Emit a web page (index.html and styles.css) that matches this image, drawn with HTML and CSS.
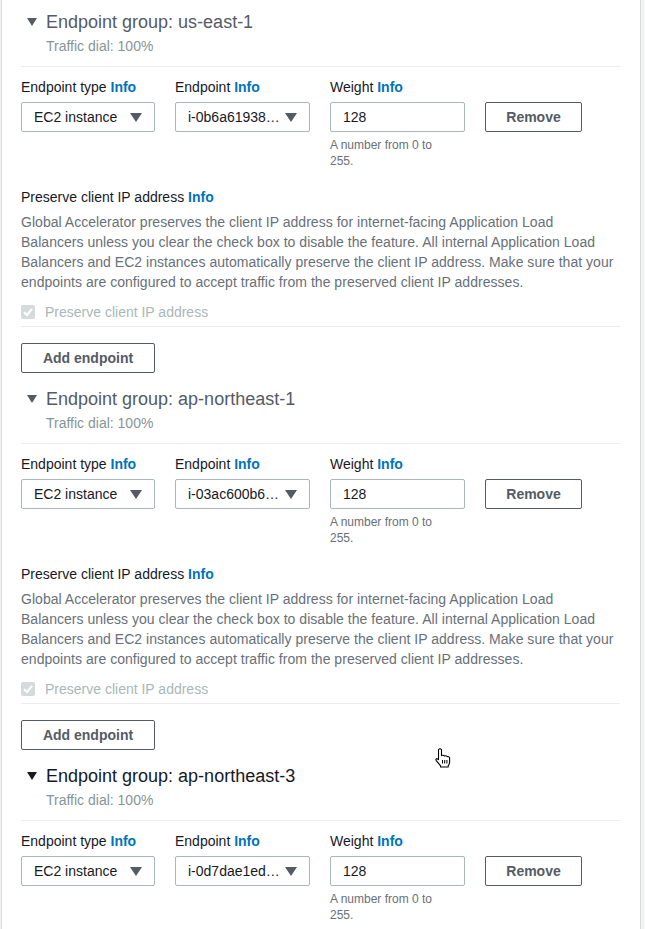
FILE: index.html
```html
<!DOCTYPE html>
<html lang="en">
<head>
<meta charset="utf-8">
<title>Endpoint groups</title>
<link rel="stylesheet" href="styles.css">
</head>
<body>
<div class="panel">

  <section class="group">
    <div class="group-head">
      <svg class="caret" viewBox="0 0 10 8" width="10" height="8"><path d="M0 0 H10 L5 8 Z"/></svg>
      <span class="group-title">Endpoint group: us-east-1</span>
    </div>
    <div class="dial">Traffic dial: 100%</div>
    <div class="divider"></div>
    <div class="endpoint-row">
      <div class="field f-type">
        <div class="label">Endpoint type <a class="info">Info</a></div>
        <div class="select"><span class="select-text">EC2 instance</span><svg class="sel-caret" viewBox="0 0 12 9" width="12" height="9"><path d="M0 0 H12 L6 9 Z"/></svg></div>
      </div>
      <div class="field f-endpoint">
        <div class="label">Endpoint <a class="info">Info</a></div>
        <div class="select"><span class="select-text">i-0b6a61938…</span><svg class="sel-caret" viewBox="0 0 12 9" width="12" height="9"><path d="M0 0 H12 L6 9 Z"/></svg></div>
      </div>
      <div class="field f-weight">
        <div class="label">Weight <a class="info">Info</a></div>
        <div class="input">128</div>
        <div class="hint">A number from 0 to<br>255.</div>
      </div>
      <button class="btn btn-remove">Remove</button>
    </div>
    <div class="preserve">
      <div class="label">Preserve client IP address <a class="info">Info</a></div>
      <p class="desc">Global Accelerator preserves the client IP address for internet-facing Application Load<br>Balancers unless you clear the check box to disable the feature. All internal Application Load<br>Balancers and EC2 instances automatically preserve the client IP address. Make sure that your<br>endpoints are configured to accept traffic from the preserved client IP addresses.</p>
      <div class="check"><span class="box"><svg viewBox="0 0 14 14" width="14" height="14"><path d="M3 7.2 L6 10 L11 3.8" fill="none" stroke="#fff" stroke-width="2"/></svg></span><span class="check-text">Preserve client IP address</span></div>
    </div>
    <div class="divider divider-bottom"></div>
    <button class="btn btn-add">Add endpoint</button>
  </section>

  <section class="group">
    <div class="group-head">
      <svg class="caret" viewBox="0 0 10 8" width="10" height="8"><path d="M0 0 H10 L5 8 Z"/></svg>
      <span class="group-title">Endpoint group: ap-northeast-1</span>
    </div>
    <div class="dial">Traffic dial: 100%</div>
    <div class="divider"></div>
    <div class="endpoint-row">
      <div class="field f-type">
        <div class="label">Endpoint type <a class="info">Info</a></div>
        <div class="select"><span class="select-text">EC2 instance</span><svg class="sel-caret" viewBox="0 0 12 9" width="12" height="9"><path d="M0 0 H12 L6 9 Z"/></svg></div>
      </div>
      <div class="field f-endpoint">
        <div class="label">Endpoint <a class="info">Info</a></div>
        <div class="select"><span class="select-text">i-03ac600b6…</span><svg class="sel-caret" viewBox="0 0 12 9" width="12" height="9"><path d="M0 0 H12 L6 9 Z"/></svg></div>
      </div>
      <div class="field f-weight">
        <div class="label">Weight <a class="info">Info</a></div>
        <div class="input">128</div>
        <div class="hint">A number from 0 to<br>255.</div>
      </div>
      <button class="btn btn-remove">Remove</button>
    </div>
    <div class="preserve">
      <div class="label">Preserve client IP address <a class="info">Info</a></div>
      <p class="desc">Global Accelerator preserves the client IP address for internet-facing Application Load<br>Balancers unless you clear the check box to disable the feature. All internal Application Load<br>Balancers and EC2 instances automatically preserve the client IP address. Make sure that your<br>endpoints are configured to accept traffic from the preserved client IP addresses.</p>
      <div class="check"><span class="box"><svg viewBox="0 0 14 14" width="14" height="14"><path d="M3 7.2 L6 10 L11 3.8" fill="none" stroke="#fff" stroke-width="2"/></svg></span><span class="check-text">Preserve client IP address</span></div>
    </div>
    <div class="divider divider-bottom"></div>
    <button class="btn btn-add">Add endpoint</button>
  </section>

  <section class="group group-hover">
    <div class="group-head">
      <svg class="caret" viewBox="0 0 10 8" width="10" height="8"><path d="M0 0 H10 L5 8 Z"/></svg>
      <span class="group-title">Endpoint group: ap-northeast-3</span>
    </div>
    <div class="dial">Traffic dial: 100%</div>
    <div class="divider"></div>
    <div class="endpoint-row">
      <div class="field f-type">
        <div class="label">Endpoint type <a class="info">Info</a></div>
        <div class="select"><span class="select-text">EC2 instance</span><svg class="sel-caret" viewBox="0 0 12 9" width="12" height="9"><path d="M0 0 H12 L6 9 Z"/></svg></div>
      </div>
      <div class="field f-endpoint">
        <div class="label">Endpoint <a class="info">Info</a></div>
        <div class="select"><span class="select-text">i-0d7dae1ed…</span><svg class="sel-caret" viewBox="0 0 12 9" width="12" height="9"><path d="M0 0 H12 L6 9 Z"/></svg></div>
      </div>
      <div class="field f-weight">
        <div class="label">Weight <a class="info">Info</a></div>
        <div class="input">128</div>
        <div class="hint">A number from 0 to<br>255.</div>
      </div>
      <button class="btn btn-remove">Remove</button>
    </div>
  </section>

  <svg class="cursor" viewBox="0 0 18 20" width="18" height="20">
    <path d="M5.5 1.6 Q7 0 8.5 1.6 V7.6 Q10 6.8 11.5 8 Q13 7.2 14.3 8.6 Q16 8.2 16.6 9.8 V14 Q16.6 16 15.2 17.6 V19 H7.6 V17.8 L3.2 12.6 Q2.4 11 4 10.6 L5.5 11.6 Z" fill="#fff" stroke="#000" stroke-width="1.1" stroke-linejoin="round"/>
    <path d="M9.5 12 V15.5 M11.7 12 V15.5 M13.9 12 V15.5" stroke="#000" stroke-width="1"/>
  </svg>
</div>
</body>
</html>
```

FILE: styles.css
```css
html, body {
  margin: 0;
  padding: 0;
}

body {
  background: #f2f3f3;
  font-family: "Liberation Sans", Arial, Helvetica, sans-serif;
  color: #16191f;
  height: 929px;
  overflow: hidden;
}

.panel {
  position: relative;
  box-sizing: border-box;
  width: 640px;
  margin-left: 1px;
  min-height: 929px;
  background: #fff;
  border-left: 1px solid #d5dbdb;
  border-right: 1px solid #d5dbdb;
  padding: 11px 20px 0 19px;
}

.group {
  padding-bottom: 15px;
}

.group-head {
  display: flex;
  align-items: center;
  padding-left: 6px;
  height: 22px;
  gap: 9px;
}

.caret {
  fill: #545b64;
  flex: none;
}

.group-title {
  font-size: 18px;
  line-height: 22px;
  color: #545b64;
}

.group-hover .caret {
  fill: #16191f;
}

.group-hover .group-title {
  color: #16191f;
}

.dial {
  margin-top: 3px;
  padding-left: 25px;
  font-size: 14px;
  line-height: 20px;
  color: #879596;
}

.divider {
  height: 1px;
  background: #eaeded;
  margin-top: 10px;
}

.endpoint-row {
  display: flex;
  align-items: flex-start;
  gap: 20px;
  margin-top: 10px;
}

.label {
  font-size: 14px;
  line-height: 20px;
  color: #16191f;
}

.info {
  color: #0073bb;
  font-weight: bold;
  text-decoration: none;
}

.f-type { width: 134px; }
.f-endpoint { width: 135px; }
.f-weight { width: 135px; }

.select,
.input {
  box-sizing: border-box;
  height: 30px;
  margin-top: 5px;
  border: 1px solid #aab7b8;
  border-radius: 2px;
  font-size: 14px;
  line-height: 28px;
  color: #16191f;
  padding-left: 12px;
}

.select {
  display: flex;
  align-items: center;
  justify-content: space-between;
  padding-right: 12px;
}

.select-text {
  white-space: nowrap;
  overflow: hidden;
}

.sel-caret {
  fill: #545b64;
  flex: none;
}

.hint {
  margin-top: 5px;
  font-size: 12px;
  line-height: 16px;
  color: #687078;
}

.btn {
  box-sizing: border-box;
  height: 30px;
  background: #fff;
  border: 1px solid #545b64;
  border-radius: 2px;
  font-family: inherit;
  font-size: 14px;
  font-weight: bold;
  color: #545b64;
  padding: 0;
}

.btn-remove {
  width: 97px;
  margin-top: 25px;
}

.btn-add {
  display: block;
  width: 134px;
  margin-top: 16px;
}

.preserve {
  margin-top: 18px;
}

.desc {
  margin: 5px 0 0;
  font-size: 14px;
  line-height: 20px;
  letter-spacing: 0.03px;
  color: #687078;
  white-space: nowrap;
}

.check {
  display: flex;
  align-items: center;
  height: 20px;
  margin-top: 10px;
  gap: 10px;
}

.box {
  display: block;
  width: 14px;
  height: 14px;
  border-radius: 2px;
  background: #d5dbdb;
}

.box svg {
  display: block;
}

.check-text {
  font-size: 14px;
  line-height: 20px;
  color: #aab7b8;
}

.divider-bottom {
  margin-top: 4px;
}

.cursor {
  position: absolute;
  left: 431px;
  top: 748px;
}
```
